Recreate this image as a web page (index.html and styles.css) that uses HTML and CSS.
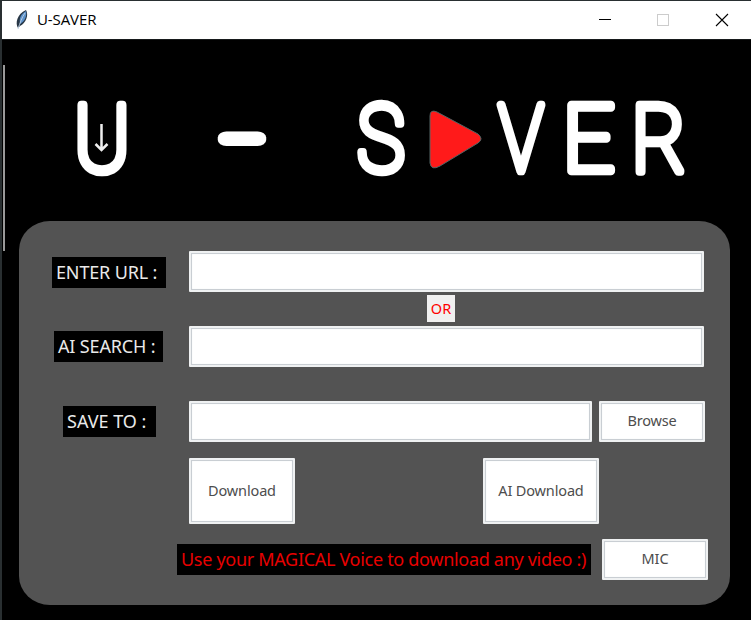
FILE: index.html
```html
<!DOCTYPE html>
<html lang="en">
<head>
<meta charset="utf-8">
<title>U-SAVER</title>
<link rel="stylesheet" href="styles.css">
</head>
<body>
<div class="window">
  <header class="titlebar">
    <svg class="feather" width="14" height="22" viewBox="0 0 14 22">
      <path d="M3 19 C0 14 2 5 11 1 C14 6 11 14 5 17 Z" fill="#283746"/>
      <path d="M5 14 C4 9 6 5 11 2 C12 7 10 12 5 15Z" fill="#5b91cb"/>
      <path d="M3 20 C5 14 7 8 10 4" fill="none" stroke="#b9cce0"/>
    </svg>
    <h1 class="title">U-SAVER</h1>
    <svg class="controls" width="132" height="14" viewBox="0 0 132 14" fill="none">
      <path d="M1 6.5H13" stroke="#000"/>
      <rect x="59.5" y="1.5" width="11" height="11" stroke="#ccc"/>
      <path d="M118 1L130 13M130 1L118 13" stroke="#000" stroke-width="1.1"/>
    </svg>
  </header>
  <main class="app">
    <svg class="logo" width="640" height="130" viewBox="60 75 640 130">
      <g class="letters">
        <text transform="translate(102 170.500) scale(.91 1)">U</text>
        <text class="dash" transform="translate(242.500 168.500) scale(1.45 1)">-</text>
        <text transform="translate(381 170.500) scale(.86 1)">S</text>
        <text transform="translate(521 170.500) scale(.8 1)">V</text>
        <text transform="translate(588.500 170.500) scale(.98 1)">E</text>
        <text transform="translate(659 170.500) scale(.9 1)">R</text>
      </g>
      <path d="M101.500 124V149M95.500 144L101.500 150L107.500 144" fill="none" stroke="#eee" stroke-width="2.500"/>
      <path d="M430 116Q430 109 437 112L478 134Q484 139 478 143L440 166Q431 171 430 163Z" fill="#ff1a1a" stroke="#526565"/>
    </svg>
    <section class="panel">
      <div class="row">
        <label class="tag url" for="url">ENTER URL :</label>
        <input class="field" id="url">
      </div>
      <div class="or"><span>OR</span></div>
      <div class="row">
        <label class="tag search" for="search">AI SEARCH :</label>
        <input class="field" id="search">
      </div>
      <div class="row save-row">
        <label class="tag save" for="save">SAVE TO :</label>
        <input class="field short" id="save">
        <button class="btn browse">Browse</button>
      </div>
      <div class="downloads">
        <button class="btn">Download</button>
        <button class="btn ai">AI Download</button>
      </div>
      <div class="voice">
        <p class="tag hint">Use your MAGICAL Voice to download any video :)</p>
        <button class="btn mic">MIC</button>
      </div>
    </section>
  </main>
</div>
</body>
</html>
```
FILE: styles.css
```css
* { box-sizing: border-box; }
body { margin: 0; background: #292f31; overflow: hidden; font-family: "Noto Sans", sans-serif; }
.window { margin-left: 2px; padding-top: 1px; height: 620px; }
.titlebar { height: 38px; background: #fff; display: flex; align-items: center; }
.feather { margin-left: 13px; }
.title { margin: -2px auto 0 8px; font: 400 15px/20px "Open Sans", sans-serif; letter-spacing: -.1px; color: #000; }
.controls { margin-right: 21px; }
.app { position: relative; height: 581px; background: #000; border-top: 1px solid #171a1c; padding: 35px 0 0 17px; }
.app::before { content: ""; position: absolute; left: 1px; top: 25px; width: 2px; height: 186px; background: #999; }
.logo { display: block; margin-left: 41px; overflow: visible; }
.letters { font: 100 93px Roboto, sans-serif; fill: #fff; stroke: #fff; stroke-width: 8.6px; stroke-linejoin: round; text-anchor: middle; }
.dash { stroke-width: 12px; }
.panel { margin-top: 16px; width: 711px; height: 384px; border-radius: 31px / 29px; background: #535353; padding-top: 30px; }
.row { height: 41px; display: flex; align-items: center; }
.tag { height: 31px; flex: none; background: #000; color: #e9e9e9; font: 400 18px/31px "Noto Sans", sans-serif; letter-spacing: -.15px; padding-left: 4px; white-space: nowrap; }
.url { width: 114px; margin: 1px 23px 0 33px; }
.search { width: 109px; margin: 0 26px 0 35px; }
.save { width: 93px; margin: 0 33px 0 44px; letter-spacing: 0; }
.field, .btn { display: block; flex: none; height: 41px; margin: 0; padding: 0; background: #fff; border: 2px solid #eff1f2; box-shadow: inset 0 0 0 1px #c9ced3, inset 0 0 1px 1px #dfe3e6; border-radius: 1px; }
.field { width: 515px; }
.short { width: 403px; margin-right: 7px; }
.btn { color: #4d4d4d; font: 400 14.5px "Noto Sans", sans-serif; letter-spacing: -.15px; width: 106px; padding-bottom: 3px; }
.or { height: 34px; padding: 3px 0 0 408px; }
.or span { display: block; width: 28px; height: 27px; background: #f0f0f0; color: #f00; text-align: center; font: 14.5px/27px "Noto Sans", sans-serif; }
.save-row { margin-top: 34px; }
.downloads { display: flex; margin: 16px 0 0 170px; }
.downloads .btn { height: 66px; }
.downloads .ai { width: 116px; margin-left: 188px; }
.voice { display: flex; align-items: center; margin: 15px 0 0 158px; }
.hint { margin: 0 11px 0 0; width: 414px; color: #e80000; letter-spacing: -.3px; }
```
